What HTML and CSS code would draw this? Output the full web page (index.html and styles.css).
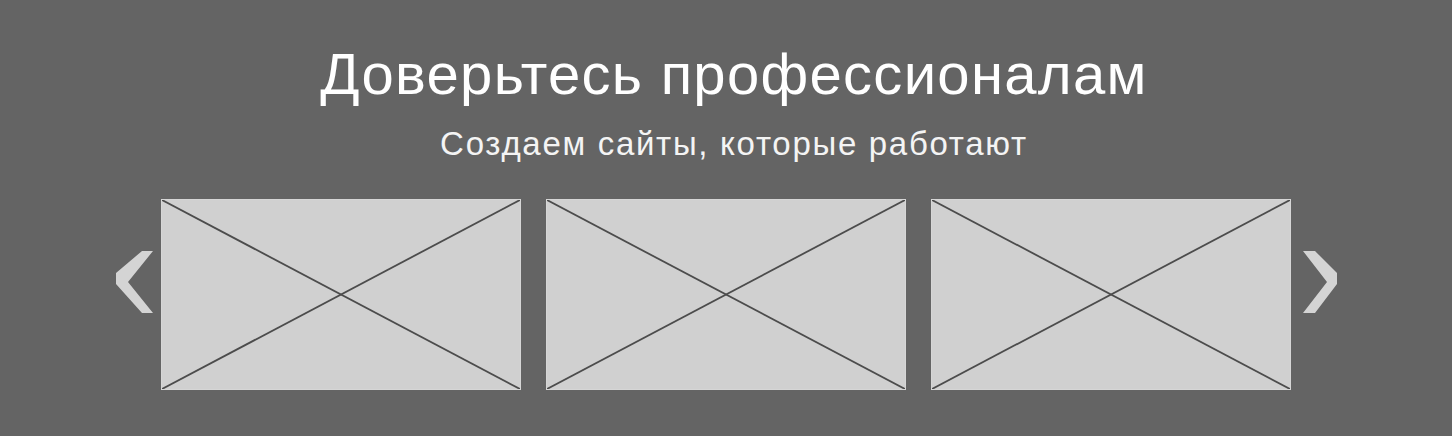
FILE: index.html
```html
<!DOCTYPE html>
<html lang="ru">
<head>
	<meta charset="UTF-8">
	<title>Доверьтесь профессионалам</title>
	<link rel="stylesheet" href="styles.css">
</head>
<body>
	<section class="promo">
		<h1>Доверьтесь профессионалам</h1>
		<p class="lead">Создаем сайты, которые работают</p>
		<div class="slider">
			<button class="arrow arrow-prev" type="button" aria-label="Назад">
				<svg width="37" height="62" viewBox="0 0 37 62"><polygon points="37,0 26,0 0,22 0,33 26,62 37,62 12,31"/></svg>
			</button>
			<div class="slides">
				<div class="slide">
					<svg viewBox="0 0 100 100" preserveAspectRatio="none"><line x1="0" y1="0" x2="100" y2="100"/><line x1="100" y1="0" x2="0" y2="100"/></svg>
				</div>
				<div class="slide">
					<svg viewBox="0 0 100 100" preserveAspectRatio="none"><line x1="0" y1="0" x2="100" y2="100"/><line x1="100" y1="0" x2="0" y2="100"/></svg>
				</div>
				<div class="slide">
					<svg viewBox="0 0 100 100" preserveAspectRatio="none"><line x1="0" y1="0" x2="100" y2="100"/><line x1="100" y1="0" x2="0" y2="100"/></svg>
				</div>
			</div>
			<button class="arrow arrow-next" type="button" aria-label="Вперёд">
				<svg width="35" height="62" viewBox="0 0 35 62"><polygon points="0,0 12,0 34,22 34,33 12,62 0,62 24,31"/></svg>
			</button>
		</div>
	</section>
</body>
</html>
```

FILE: styles.css
```css
html, body {
	margin: 0;
	padding: 0;
	height: 100%;
}
body {
	background-color: #646464;
	font-family: "Liberation Sans", Arial, sans-serif;
	color: #fff;
}
.promo {
	display: flex;
	flex-direction: column;
	align-items: center;
	padding-top: 41px;
}
h1 {
	margin: 0 0 0 16px;
	font-size: 58px;
	font-weight: normal;
	line-height: 66px;
	letter-spacing: 1.3px;
}
.lead {
	margin: 19px 0 0 16px;
	font-size: 33px;
	line-height: 36px;
	letter-spacing: 1.7px;
	color: #f4f4f4;
}
.slider {
	display: flex;
	align-items: center;
	margin: 37px 0 0 2px;
}
.slides {
	display: flex;
	gap: 25px;
}
.slide {
	width: 358px;
	height: 189px;
	background-color: #d0d0d0;
	border: 1px solid #d6d6d6;
}
.slide svg {
	display: block;
	width: 100%;
	height: 100%;
}
.slide line {
	stroke: #4c4c4c;
	stroke-width: 1.8;
	vector-effect: non-scaling-stroke;
}
.arrow {
	border: none;
	background: none;
	padding: 0;
	margin: 0 0 26px;
	cursor: pointer;
}
.arrow svg {
	display: block;
	fill: #d4d4d4;
}
.arrow-prev {
	margin-right: 8px;
}
.arrow-next {
	margin-left: 12px;
}
```
